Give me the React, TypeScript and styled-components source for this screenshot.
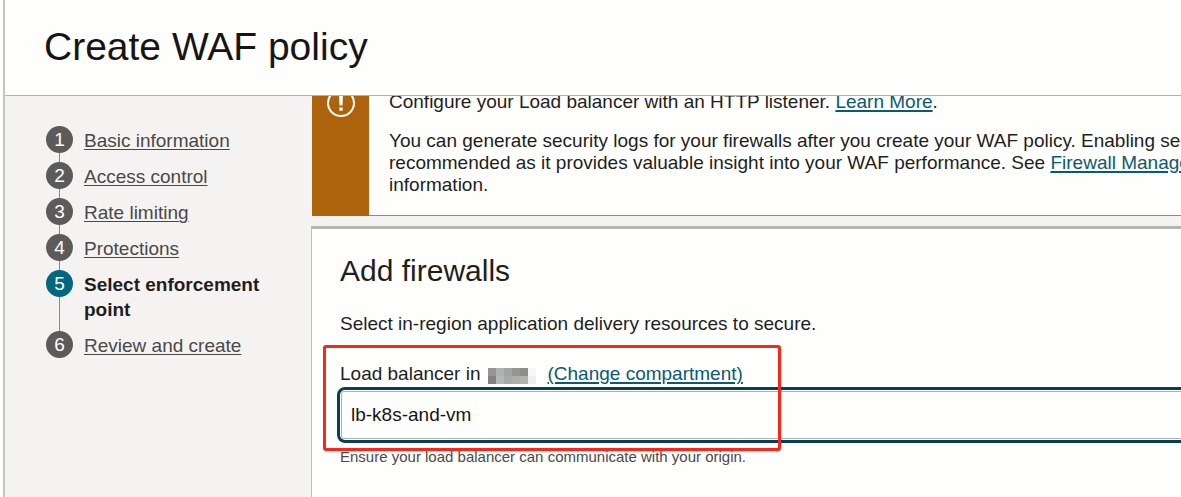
import React from "react";
import styled, { createGlobalStyle } from "styled-components";

const GlobalStyle = createGlobalStyle`
  *, *::before, *::after { box-sizing: border-box; }
  html, body { margin: 0; background: #fefefc; }
  body {
    font-family: "Liberation Sans", Arial, sans-serif;
    font-size: 19px;
    line-height: 22px;
    color: #1f1e1c;
    overflow: hidden;
  }
  h1, h2, p, ol { margin: 0; padding: 0; }
`;

const Page = styled.div`
  display: flex;
  flex-direction: column;
  min-height: 100vh;
  margin-left: 3px;
  border-left: 2px solid #c4c4c2;
  overflow: hidden;
`;

const Header = styled.header`
  padding: 25px 39px 26px;
  border-bottom: 1px solid #b3b1af;
  background: #fefefd;
`;

const Title = styled.h1`
  font-size: 39px;
  line-height: 44px;
  font-weight: 400;
  color: #161513;
`;

const Body = styled.div`
  flex: 1;
  display: flex;
  background: #f5f3f2;
  overflow: hidden;
`;

const Sidebar = styled.nav`
  flex: 0 0 306px;
  padding: 30px 40px 20px 41px;
`;

const Steps = styled.ol`
  list-style: none;
`;

const Step = styled.li`
  display: flex;
  gap: 11px;
`;

const Marker = styled.div`
  display: flex;
  flex-direction: column;
  align-items: center;
`;

const StepNumber = styled.span<{ $current?: boolean }>`
  flex: none;
  width: 27px;
  height: 27px;
  border-radius: 50%;
  background: ${(p) => (p.$current ? "#04677f" : "#5c5b5a")};
  color: #fff;
  line-height: 27px;
  text-align: center;
`;

const Connector = styled.span`
  flex: 1;
  width: 1px;
  background: #8b8987;
`;

const StepLabel = styled.div<{ $last?: boolean }>`
  padding: 2px 0 ${(p) => (p.$last ? "0" : "9px")};
  line-height: 25px;
`;

const StepLink = styled.a`
  color: #4a4846;
  text-decoration: underline;
  text-decoration-thickness: 1px;
  text-underline-offset: 2px;
`;

const Main = styled.main`
  flex: 1;
  min-width: 0;
  display: flex;
  flex-direction: column;
  gap: 10px;
`;

const Alert = styled.section`
  display: flex;
  margin-top: -21px;
  margin-left: 1px;
  background: #fefefd;
  border-bottom: 1px solid #8f8b86;
`;

const AlertBadge = styled.div`
  flex: 0 0 57px;
  display: flex;
  justify-content: center;
  padding-top: 14px;
  margin-bottom: -1px;
  background: #ac630c;
`;

const AlertText = styled.div`
  display: flex;
  flex-direction: column;
  gap: 17px;
  padding: 16px 0 19px 20px;
  white-space: nowrap;
`;

const Link = styled.a`
  color: #0b5a70;
  text-decoration: underline;
  text-decoration-thickness: 2px;
  text-underline-offset: 2px;
`;

const Panel = styled.section`
  flex: 1;
  padding: 26px 0 20px 28px;
  border-top: 3px solid #b5b5b2;
  border-left: 1px solid #bdbdbb;
  background: #fefefc;
`;

const PanelTitle = styled.h2`
  font-size: 30px;
  line-height: 32px;
  font-weight: 400;
`;

const Intro = styled.p`
  margin-top: 26px;
`;

const Field = styled.div`
  position: relative;
  margin-top: 28px;
`;

const LabelRow = styled.div`
  display: flex;
  align-items: center;
`;

const Redacted = styled.svg`
  margin: 4px 12px 0 7px;
`;

const InputFrame = styled.div`
  margin: 2px -20px 0 -3px;
  padding: 1px;
  border: 3px solid #05414f;
  border-radius: 8px;
`;

const Input = styled.input`
  display: block;
  width: 100%;
  height: 48px;
  padding: 0 9px;
  border: 1px solid #b3b0ac;
  border-radius: 3px;
  background: #fefefc;
  font: inherit;
  color: #161513;
  outline: none;
`;

const Hint = styled.p`
  margin-top: 4px;
  font-size: 15px;
  line-height: 20px;
  color: #4b4a48;
`;

const Highlight = styled.div`
  position: absolute;
  top: -18px;
  left: -17px;
  width: 458px;
  height: 106px;
  border: 3px solid #fb2619;
  border-radius: 3px;
  pointer-events: none;
`;

const steps = [
  "Basic information",
  "Access control",
  "Rate limiting",
  "Protections",
  "Select enforcement point",
  "Review and create",
];
const currentStep = 4;

const mosaic = [
  ["#9b9390", "#b0b0b2", "#a2a5a5", "#959595", "#8d8d8e", "#f6f6f8"],
  ["#828284", "#b8b8b7", "#a6aaa8", "#adadac", "#b3b3b0", "#eeeeec"],
];

export default function App() {
  return (
    <>
      <GlobalStyle />
      <Page>
        <Header>
          <Title>Create WAF policy</Title>
        </Header>
        <Body>
          <Sidebar aria-label="Steps">
            <Steps>
              {steps.map((label, i) => (
                <Step key={label}>
                  <Marker>
                    <StepNumber $current={i === currentStep}>{i + 1}</StepNumber>
                    {i < steps.length - 1 && <Connector />}
                  </Marker>
                  <StepLabel $last={i === steps.length - 1}>
                    {i === currentStep ? (
                      <strong aria-current="step">{label}</strong>
                    ) : (
                      <StepLink href="#">{label}</StepLink>
                    )}
                  </StepLabel>
                </Step>
              ))}
            </Steps>
          </Sidebar>
          <Main>
            <Alert>
              <AlertBadge>
                <svg width="28" height="28" viewBox="0 0 28 28" fill="none" aria-hidden="true">
                  <circle cx="14" cy="14" r="13" stroke="#fff" strokeWidth="2" />
                  <path d="M12 5h4l-.5 11.500h-3z" fill="#fff" />
                  <path d="M12.300 18.500h3.400v3.200h-3.400z" fill="#fff" />
                </svg>
              </AlertBadge>
              <AlertText>
                <p>
                  Configure your Load balancer with an HTTP listener. <Link href="#">Learn More</Link>.
                </p>
                <p>
                  You can generate security logs for your firewalls after you create your WAF policy. Enabling security
                  <br />
                  recommended as it provides valuable insight into your WAF performance. See{" "}
                  <Link href="#">Firewall Management</Link>
                  <br />
                  information.
                </p>
              </AlertText>
            </Alert>
            <Panel>
              <PanelTitle>Add firewalls</PanelTitle>
              <Intro>Select in-region application delivery resources to secure.</Intro>
              <Field>
                <LabelRow>
                  <label htmlFor="load-balancer">Load balancer in</label>
                  <Redacted width="48" height="16" viewBox="0 0 48 16" aria-hidden="true">
                    {mosaic.map((row, y) =>
                      row.map((fill, x) => (
                        <rect key={`${x}-${y}`} x={x * 8} y={y * 8} width="8" height="8" fill={fill} />
                      ))
                    )}
                  </Redacted>
                  <Link href="#">(Change compartment)</Link>
                </LabelRow>
                <InputFrame>
                  <Input id="load-balancer" defaultValue="lb-k8s-and-vm" />
                </InputFrame>
                <Hint>Ensure your load balancer can communicate with your origin.</Hint>
                <Highlight />
              </Field>
            </Panel>
          </Main>
        </Body>
      </Page>
    </>
  );
}
